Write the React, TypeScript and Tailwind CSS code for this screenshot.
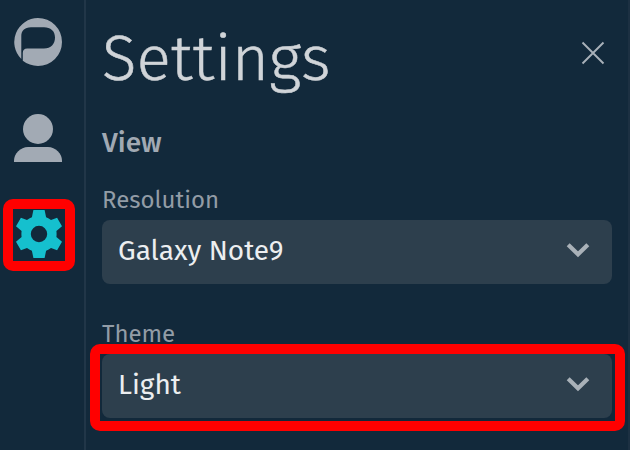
import React from "react";

const fontStack = "font-['Fira_Sans','Noto_Sans',sans-serif]";

function LogoIcon() {
  return (
    <svg className="block size-12" viewBox="0 0 48 48" fill="#a2aab4">
      <path
        fillRule="evenodd"
        d="M24 0a24 24 0 0 1 0 48c-5.700 0-10.900-1.900-15.200-5.200V35c0-3 1.400-4.500 4.500-4.500H30C37 30.500 41 26 41 19.500C41 13 36.500 9.300 30 9.300H17C10.500 9.300 7.300 13 7.300 18V41A24 24 0 0 1 24 0Z"
      />
    </svg>
  );
}

function UserIcon() {
  return (
    <svg className="block size-12" viewBox="0 0 48 48" fill="#a2aab4">
      <circle cx="24" cy="15" r="15" />
      <path d="M0 48v-1.500C0 39.500 6.500 33 14 33h20c7.500 0 14 6.500 14 13.500V48Z" />
    </svg>
  );
}

function GearIcon() {
  return (
    <svg className="block size-12" viewBox="-0.4 0 48 48" fill="#15c0ce">
      <path
        fillRule="evenodd"
        d="M19 0h11.200l1.500 7.200q2.800 1.200 4.900 2.900L42.700 7.800 47.600 16.300 42 21q.4 3 0 6L47.600 31.700 42.700 40.200 36.600 38q-2.200 1.800-4.900 2.800L30.200 48H19L17.500 40.800q-2.700-1-4.900-2.800L6.500 40.200 1.600 31.700 7.200 27q-.4-3 0-6L1.600 16.300 6.500 7.800 12.600 10.100q2.100-1.700 4.900-2.900ZM24.600 15.800a8.200 8.200 0 1 0 0 16.400a8.200 8.200 0 0 0 0-16.400Z"
      />
    </svg>
  );
}

function Chevron() {
  return (
    <svg className="block h-[15px] w-6" viewBox="0 0 24 15" fill="none" stroke="#a9b1b8" strokeWidth="4.200">
      <path d="M2.200 1.800 12 11.300 21.800 1.800" />
    </svg>
  );
}

function SelectField({ label, value }: { label: string; value: string }) {
  return (
    <div>
      <div className="h-8 text-2xl leading-8 text-[#929ca6]">{label}</div>
      <div className="mt-1 flex h-16 items-center justify-between rounded-lg bg-[#2d3f4d] pr-[22px] pl-4">
        <span className="mb-[3px] text-[28px] leading-10 whitespace-nowrap text-[#eceef0]">{value}</span>
        <span className="mb-[3px]">
          <Chevron />
        </span>
      </div>
    </div>
  );
}

export default function App() {
  return (
    <div className={`relative flex h-[450px] w-[630px] overflow-hidden bg-[#12293b] ${fontStack}`}>
      <nav className="flex w-[86px] shrink-0 flex-col gap-12 border-r-2 border-[#213648] pt-[18px] pl-[14px]">
        <LogoIcon />
        <UserIcon />
        <GearIcon />
      </nav>
      <main className="flex-1 border-r-2 border-[#1c3042] px-4 pt-[19px]">
        <header className="flex h-20 justify-between">
          <h1 className="text-[64px] leading-[80px] font-light whitespace-nowrap text-[#d0d4d8] [-webkit-text-stroke:0.5px_#d0d4d8]">
            Settings
          </h1>
          <svg className="mt-[22px] mr-[7px] block size-6" viewBox="0 0 24 24" fill="none" stroke="#a9b1b9" strokeWidth="1.900">
            <path d="M1.500 1.500 22.500 22.500M22.500 1.500 1.500 22.500" />
          </svg>
        </header>
        <h2 className="mt-6 h-[39px] text-[28px] leading-[39px] font-medium text-[#a1a9b3]">View</h2>
        <div className="mt-[22px] flex flex-col gap-[34px]">
          <SelectField label="Resolution" value="Galaxy Note9" />
          <SelectField label="Theme" value="Light" />
        </div>
      </main>
      <div className="absolute top-[199px] left-[3px] h-[72px] w-[72px] rounded-[10px] border-10 border-[#ff0000]" />
      <div className="absolute top-[344px] left-[90px] h-[87px] w-[535px] rounded-[10px] border-10 border-[#ff0000]" />
    </div>
  );
}
